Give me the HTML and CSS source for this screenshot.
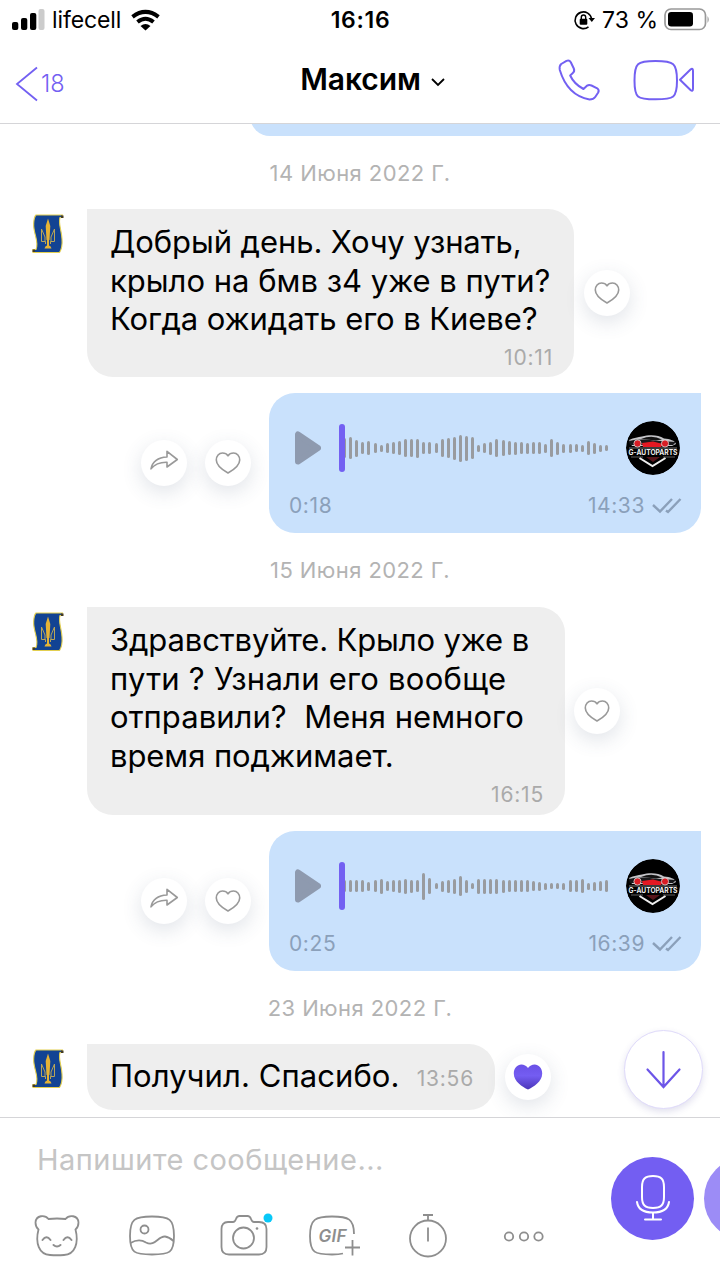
FILE: index.html
```html
<!DOCTYPE html>
<html lang="ru">
<head>
<meta charset="utf-8">
<title>Максим</title>
<link rel="stylesheet" href="styles.css">
</head>
<body>
<svg class="defs" width="0" height="0">
  <defs>
    <linearGradient id="violet" x1="0" y1="0" x2="0" y2="1"><stop offset="0" stop-color="#6a51e6"/><stop offset=".45" stop-color="#745df2"/><stop offset="1" stop-color="#4a35b8"/></linearGradient>
    <clipPath id="disc"><circle cx="27" cy="27" r="27"/></clipPath>
    <symbol id="heart" viewBox="0 0 46 46"><path d="M23 33C18.500 30.500 11.300 26.200 11.300 20C11.300 16 14 13 17.400 13C19.900 13 22 14.200 23 15.800C24 14.200 26.100 13 28.600 13C32 13 34.700 16 34.700 20C34.700 26.200 27.500 30.500 23 33Z" fill="none" stroke="#999" stroke-width="1.600" stroke-linejoin="round"/></symbol>
    <symbol id="share" viewBox="0 0 46 46"><path d="M26 17V11.300L36.300 19.500L26 27V22.200C19 22 13.500 24.500 10 28.800C11.500 21.500 17 17.500 26 17Z" fill="none" stroke="#999" stroke-width="1.600" stroke-linejoin="round"/></symbol>
    <symbol id="emblem" viewBox="0 0 34 42">
      <path d="M5 2H31.500V4.500H29C27 10 30.500 17 31 26C31.500 33 30.500 36.500 28.500 39.500H2V36.500H5C8.500 29 2 20 2.700 10.500C2.900 6 3.500 3.500 5 2Z" fill="#124393" stroke="#e3cf50" stroke-width="1.100"/>
      <path d="M30 2.500h2.500v2.500h-2.500zM1.500 36.500h2.500v2.500H1.500z" fill="#443b25"/>
      <path d="M17 5.500L19.300 13L18.500 27H15.500L14.700 13ZM13.500 35.500Q14 33 16 32.500V27H18V32.500Q20 33 20.500 35.500Z" fill="#e5b336"/>
      <path d="M10.500 16V28.500H14.500V31M10.500 16L14 24V28.500M23.500 16V28.500H19.500V31M23.500 16L20 24V28.500" fill="none" stroke="#b9a557" stroke-width="1"/>
    </symbol>
    <symbol id="ticks" viewBox="0 0 32 18"><path d="M1 8L8 14.500L20 2M14 13.500L16 15L28.500 2" fill="none" stroke="#8ba0ba" stroke-width="2.400"/></symbol>
    <symbol id="play" viewBox="0 0 26 34"><path d="M3 3.500V30.500L23 17Z" fill="#8e9aaf" stroke="#8e9aaf" stroke-width="6" stroke-linejoin="round"/></symbol>
    <symbol id="logo" viewBox="0 0 54 54">
      <g clip-path="url(#disc)">
        <circle cx="27" cy="27" r="27" fill="#000"/>
        <path d="M3 19C8 16.500 12 16.500 16 15.500C23 13.800 32 13.500 38 17.500C44 18 49 19.500 50 23L46 25H6Z" fill="#c4c4c8"/>
        <path d="M15 18Q26 13.500 36 18.500L30 19.500Z" fill="#111"/>
        <path d="M3 20Q14 17.500 28 19.500L50 21L47 24H4Z" fill="#18181a"/>
        <path d="M16 22L27 20.500L37 23L35 26H17Z" fill="#e41822"/>
        <circle cx="11.500" cy="22.500" r="3.600" fill="#d81d25" stroke="#ddd" stroke-width=".8"/><circle cx="39" cy="22.500" r="3.600" fill="#d81d25" stroke="#ddd" stroke-width=".8"/>
        <path d="M3 27H51" stroke="#aaa" stroke-width=".7"/>
        <text x="27" y="33.500" text-anchor="middle" textLength="49" lengthAdjust="spacingAndGlyphs" class="logo-text">G-AUTOPARTS</text>
        <path d="M5 36H17M37 36H49" stroke="#777" stroke-width=".8"/>
        <path d="M20 36H34L27 41Z" fill="#57151b"/>
        <path d="M13.500 37L26.500 45L39.500 37" fill="none" stroke="#eee" stroke-width="2"/>
      </g>
    </symbol>
  </defs>
</svg>

<header class="status">
  <div class="status-left">
    <svg width="33" height="22" viewBox="0 0 33 22"><rect x="0" y="13" width="6.300" height="8" rx="2"/><rect x="9" y="9" width="6.300" height="12" rx="2"/><rect x="18" y="4" width="6.300" height="17" rx="2"/><rect x="26.500" y="0" width="6" height="21" rx="2" fill="#ccc"/></svg>
    <span class="carrier">lifecell</span>
    <svg width="29" height="22" viewBox="0 0 29 22"><g fill="none" stroke="#000" stroke-width="4"><path d="M2.500 7.800Q15.500-2 28.500 7.800"/><path d="M7.500 13Q15.500 6.500 23.500 13"/></g><path d="M10.500 17Q15.500 13 20.500 17L15.500 21.500Z"/></svg>
  </div>
  <span class="clock">16:16</span>
  <div class="status-right">
    <svg width="21" height="20" viewBox="0 0 21 20"><path d="M14.500 16.800A8.300 8.300 0 1 1 17.600 9" fill="none" stroke="#000" stroke-width="1.600"/><path d="M14.500 8H21L17.800 12Z"/><rect x="5.700" y="8.800" width="7.600" height="6" rx="1"/><path d="M7.300 9V7.200a2.200 2.200 0 0 1 4.400 0V9" fill="none" stroke="#000" stroke-width="1.400"/></svg>
    <span class="percent">73 %</span>
    <svg width="46" height="22" viewBox="0 0 46 22"><rect x="1" y="0" width="40.500" height="20.500" rx="6" fill="none" stroke="#999" stroke-width="1.700"/><rect x="4" y="3" width="25" height="14.400" rx="3.200"/><path d="M43.500 7Q46 10.500 43.500 14Z" fill="#999"/></svg>
  </div>
</header>

<nav class="nav">
  <div class="back">
    <svg width="24" height="36" viewBox="0 0 24 36"><path d="M22 1.500L2 18L22 34.500" fill="none" stroke="#7360f2" stroke-width="1.800"/></svg>
    <span class="back-count">18</span>
  </div>
  <div class="contact"><span class="contact-name">Максим</span>
    <svg width="16" height="10" viewBox="0 0 16 10"><path d="M2 2L8 8L14 2" fill="none" stroke="#000" stroke-width="1.800"/></svg>
  </div>
  <div class="calls">
    <svg width="42" height="42" viewBox="0 0 42 42"><path d="M3.200 5L8.500 1.900Q11.300.7 12.800 3.300L15.800 9.500Q17.100 12.500 14.300 14.500L12.200 16.500Q16 25 25.500 30L29.200 26.600Q31 25.300 33.500 26.500L39.200 29.300Q41.500 31 40.200 33.500L37.200 38Q35.500 40.500 31.500 40.500Q9.500 36.500 1.800 11Q1 7 3.200 5Z" fill="none" stroke="#7360f2" stroke-width="2" stroke-linejoin="round"/></svg>
    <svg width="62" height="42" viewBox="0 0 62 42"><path d="M1.500 21.500C1.500 4 4 2 22.500 2S44 4 44 21.500S41 40.300 22.500 40.300S1.500 39 1.500 21.500Z" fill="none" stroke="#7360f2" stroke-width="2"/><path d="M47 20.700L57.500 10.500Q60 8.500 60 12V29.500Q60 33 57.500 31Z" fill="none" stroke="#7360f2" stroke-width="2" stroke-linejoin="round"/></svg>
  </div>
</nav>

<main class="chat">
  <div class="previous"><div class="previous-bubble"></div></div>
  <div class="date">14 Июня 2022 г.</div>

  <section class="row in">
    <svg class="sender" width="34" height="42"><use href="#emblem"/></svg>
    <div class="bubble first">
      <p class="line l1">Добрый день. Хочу узнать,</p>
      <p class="line l2">крыло на бмв з4 уже в пути?</p>
      <p class="line l3">Когда ожидать его в Киеве?</p>
      <time class="time">10:11</time>
    </div>
    <button class="round"><svg><use href="#heart"/></svg></button>
  </section>

  <section class="row out">
    <button class="round"><svg><use href="#share"/></svg></button>
    <button class="round"><svg><use href="#heart"/></svg></button>
    <div class="voice">
      <div class="player"><svg class="play"><use href="#play"/></svg><div class="wave" data-levels="20,22,17,12,14,10,7,10,12,14,18,18,19,12,12,10,18,20,23,27,25,22,7,10,13,18,16,14,13,12,11,12,12,9,18,13,9,9,8,7,14,11,7,6"></div><svg class="logo"><use href="#logo"/></svg></div>
      <div class="meta"><span>0:18</span><span class="sent">14:33<svg width="32" height="18"><use href="#ticks"/></svg></span></div>
    </div>
  </section>

  <div class="date later">15 Июня 2022 г.</div>

  <section class="row in">
    <svg class="sender" width="34" height="42"><use href="#emblem"/></svg>
    <div class="bubble second">
      <p class="line l4">Здравствуйте. Крыло уже в</p>
      <p class="line l5">пути ? Узнали его вообще</p>
      <p class="line l6">отправили?&nbsp; Меня немного</p>
      <p class="line l7">время поджимает.</p>
      <time class="time">16:15</time>
    </div>
    <button class="round"><svg><use href="#heart"/></svg></button>
  </section>

  <section class="row out">
    <button class="round"><svg><use href="#share"/></svg></button>
    <button class="round"><svg><use href="#heart"/></svg></button>
    <div class="voice">
      <div class="player"><svg class="play"><use href="#play"/></svg><div class="wave" data-levels="12,12,12,12,9,12,15,10,12,13,15,13,12,27,16,6,11,13,15,20,13,6,15,15,15,15,13,12,12,12,12,10,9,7,6,6,7,12,12,14,7,9,10,12"></div><svg class="logo"><use href="#logo"/></svg></div>
      <div class="meta"><span>0:25</span><span class="sent">16:39<svg width="32" height="18"><use href="#ticks"/></svg></span></div>
    </div>
  </section>

  <div class="date last">23 Июня 2022 г.</div>

  <section class="row in">
    <svg class="sender" width="34" height="42"><use href="#emblem"/></svg>
    <div class="bubble short">
      <p class="line l8">Получил. Спасибо.</p>
      <time class="time">13:56</time>
    </div>
    <button class="round"><svg viewBox="0 0 46 46"><path d="M23 35.500C17.500 33 8.800 27.500 8.800 19.500C8.800 14 12.500 10.500 16.300 10.500Q20.500 10.500 23 14Q25.500 10.500 29.700 10.500C33.500 10.500 37.200 14 37.200 19.500C37.200 27.500 28.500 33 23 35.500Z" fill="url(#violet)"/></svg></button>
  </section>
  <button class="scroll-down"><svg width="36" height="38" viewBox="0 0 36 38"><path d="M17.500 1V36M1.500 18.500L17.500 36L33.500 18.500" fill="none" stroke="#6c55e8" stroke-width="2.200" stroke-linecap="round"/></svg></button>
</main>

<footer class="composer">
  <div class="compose-main">
    <div class="placeholder">Напишите сообщение...</div>
    <div class="tools">
      <svg width="46" height="44" viewBox="0 0 46 44"><path d="M14.500 5Q23 4 31.500 5C35 .5 44 1 44.500 8.500Q44.500 13 41.500 15.500C45 29 41 40.500 30 41Q23 41.500 16 41C5 40.500 1 29 4.500 15.500Q1.500 13 1.500 8.500C2 1 11 .5 14.500 5Z"/><path d="M8.500 26Q12.500 20.500 16.500 26M29.500 26Q33.500 20.500 37.500 26M19.500 31Q23 34 26.500 31" stroke-width="2" stroke-linecap="round"/></svg>
      <svg width="46" height="44" viewBox="0 0 46 44"><path d="M1 22C1 5 5.500 2.500 23 2.500S45 5 45 22S40.500 40.500 23 40.500S1 39 1 22Z"/><circle cx="15.500" cy="15.500" r="4"/><path d="M1.500 29Q10 24 17 28.500C26 33 29 22 36 22.500Q40 23 44.500 27"/></svg>
      <svg class="camera" width="48" height="44" viewBox="0 0 48 44"><path d="M8 8H13Q15 8 16 5Q17 2 19.500 2H27.500Q30 2 31 5Q32 8 34 8H39Q46.500 8 46.500 15V33Q46.500 40.500 39 40.500H9Q1.500 40.500 1.500 33V15Q1.500 8 8 8Z"/><circle cx="23.500" cy="24" r="10.500"/><circle cx="37" cy="14.500" r="1.300" fill="#8e8e8e" stroke="none"/><circle cx="48" cy="4" r="4.500" fill="#08c8f8" stroke="none"/></svg>
      <svg class="gif" width="52" height="44" viewBox="0 0 52 44"><path d="M45 20C45 5 39.500 2.500 23 2.500S1 5 1 22S6 40.500 23 40.500Q30 40.500 34 39.500M43.500 26V41.500M36 33.500H51"/><text x="9.500" y="27.500" textLength="28" class="gif-text">GIF</text></svg>
      <svg width="38" height="44" viewBox="0 0 38 44"><circle cx="19" cy="24.500" r="18"/><path d="M14 1H24M19 1V6.500M19 13.500V27.500"/></svg>
      <svg width="40" height="44" viewBox="0 0 40 44"><circle cx="5" cy="22.500" r="4.200"/><circle cx="20" cy="22.500" r="4.200"/><circle cx="34.500" cy="22.500" r="4.200"/></svg>
    </div>
  </div>
  <div class="record">
    <button class="mic"><svg width="36" height="48" viewBox="0 0 36 48"><g fill="none" stroke="#fff" stroke-width="2" stroke-linecap="round"><path d="M18 1C26 1 29 4 29 12V22C29 30 26 33 18 33S7 30 7 22V12C7 4 10 1 18 1Z"/><path d="M2 27C3 34 9 37.500 18 37.500S33 34 34 27M18 38V44.500M10 44.500H26"/></g></svg></button>
    <button class="next"></button>
  </div>
</footer>
<script src="wave.js"></script>
</body>
</html>
```
FILE: styles.css
```css
* { box-sizing: border-box; }
body { margin: 0; width: 720px; height: 1280px; overflow: hidden; display: flex; flex-direction: column; background: #fff; color: #000; font-family: Inter, "Noto Sans", sans-serif; }
.defs { width: 0; height: 0; }
button { border: 0; padding: 0; background: none; flex: none; }
svg { display: block; overflow: visible; flex: none; }
p { margin: 0; }
.status { height: 40px; flex: none; display: grid; grid-template-columns: 1fr auto 1fr; align-items: center; padding: 0 10px 0 12px; font-size: 23px; line-height: 40px; }
.status-left { display: flex; align-items: center; gap: 8px; }
.status-left svg:first-child { margin-top: -1px; }
.carrier { width: 70px; letter-spacing: -.1px; white-space: nowrap; margin: 0 0 0 -1px; }
.clock { font-weight: 600; font-size: 23px; letter-spacing: .7px; margin-left: -1px; }
.status-right { display: flex; align-items: center; justify-content: flex-end; gap: 6px; white-space: nowrap; }
.percent { font-size: 23px; padding-left: 1px; }
.nav { height: 84px; flex: none; display: grid; grid-template-columns: 1fr auto 1fr; align-items: center; padding: 0 25px 4px 15px; border-bottom: 1px solid #d5d5d8; }
.back { display: flex; align-items: center; gap: 2px; padding-top: 8px; color: #7360f2; }
.back-count { font-size: 23.500px; font-weight: 300; }
.contact { display: flex; align-items: center; gap: 9px; padding: 0 0 2px 36px; }
.contact svg { margin-top: 7px; }
.contact-name { font-size: 30px; font-weight: 600; letter-spacing: -.1px; }
.calls { display: flex; justify-content: flex-end; gap: 33px; }
.chat { height: 993px; flex: none; position: relative; overflow: hidden; }
.previous { display: flow-root; height: 12px; padding-left: 250px; }
.previous-bubble { width: 448px; height: 40px; margin-top: -28px; background: #c9e1fc; border-radius: 28px; }
.date { height: 73px; line-height: 75px; text-align: center; font-size: 22px; color: #b3b3b3; letter-spacing: .42px; text-transform: capitalize; }
.date.later { height: 74px; }
.row { display: flex; align-items: center; }
.in { padding-left: 31px; gap: 9px; }
.sender { align-self: flex-start; margin: 4px 13px 0 0; }
.bubble { background: #eee; border-radius: 0 26px 26px 26px; padding: 14px 22px 0 23px; flex: none; display: flex; flex-direction: column; }
.first { width: 487px; height: 168px; }
.second { width: 478px; height: 208px; }
.short { width: 408px; height: 66px; flex-direction: row; align-items: center; justify-content: space-between; padding-top: 0; }
.line { font-size: 31px; line-height: 38.700px; white-space: nowrap; }
.l1, .l3 { letter-spacing: -.09px; }
.l4 { letter-spacing: -.13px; }
.l5 { letter-spacing: .25px; }
.l6 { letter-spacing: .04px; }
.l7 { letter-spacing: -.07px; }
.l8 { letter-spacing: .08px; padding-bottom: 1px; }
.time { font-size: 21px; line-height: 37px; color: #aaa; align-self: flex-end; letter-spacing: .8px; margin-right: -1px; }
.short .time { align-self: center; padding-top: 3px; }
.round { width: 46px; height: 46px; border-radius: 50%; background: #fff; box-shadow: 0 6px 20px rgba(65, 80, 110, .16); }
.in .round { margin-left: 1px; }
.second + .round { margin-left: 0; }
.round svg { width: 46px; height: 46px; }
.out { justify-content: flex-end; padding-right: 19px; gap: 18px; margin-top: 16px; }
.voice { width: 432px; height: 140px; background: #c9e1fc; border-radius: 26px 0 26px 26px; padding: 25px 17px 0 20px; }
.player { display: flex; align-items: center; padding: 3px 2px 0 6px; }
.play { width: 26px; height: 34px; margin-right: 18px; }
.wave { width: 268px; height: 48px; display: flex; align-items: center; gap: 3.100px; flex: none; }
.wave::before { content: ""; width: 5.500px; height: 48px; border-radius: 3px; background: #7360f2; margin-right: -4.500px; z-index: 1; flex: none; }
.bar { width: 3px; border-radius: 1.500px; background: #999b9f; flex: none; }
.logo { width: 54px; height: 54px; margin-left: 19px; }
.logo-text { font: 700 7px Inter, sans-serif; fill: #eee; }
.meta { display: flex; justify-content: space-between; color: #8ba0ba; font-size: 21px; line-height: 62px; letter-spacing: .6px; }
.sent { display: flex; align-items: center; gap: 7px; }
.scroll-down { position: absolute; right: 17px; bottom: 8px; width: 79px; height: 79px; border: 1.500px solid #dfdafa; border-radius: 50%; background: #fff; box-shadow: 0 3px 7px rgba(70, 60, 150, .16); display: grid; place-items: center; }
.composer { height: 163px; flex: none; border-top: 1px solid #d5d5d8; display: flex; justify-content: space-between; background: #fff; }
.compose-main { padding: 21px 0 0 34px; }
.placeholder { height: 42px; margin-left: 3px; line-height: 41px; font-size: 29px; letter-spacing: .48px; color: #c5c5c5; white-space: nowrap; }
.tools { display: flex; padding-top: 33px; }
.tools svg { fill: none; stroke: #8e8e8e; stroke-width: 1.800; margin-right: 49px; }
.tools .camera { margin-right: 41px; }
.tools svg:nth-child(2) { margin-right: 45px; }
.tools .gif { margin-right: 48px; }
.tools svg:nth-child(5) { margin-right: 57px; }
.tools svg:last-child { margin-right: 0; }
.gif-text { font: italic 600 17px Inter, sans-serif; fill: #8e8e8e; stroke: none; }
.record { display: flex; gap: 10px; width: 109px; padding-top: 39px; flex: none; overflow: hidden; }
.mic, .next { width: 83px; height: 83px; border-radius: 50%; background: #735ef2; display: grid; place-items: center; }
.next { background: #9c8cf6; }
```
FILE: wave.js
```js
document.querySelectorAll('.wave').forEach(function (wave) {
  wave.dataset.levels.split(',').forEach(function (level) {
    var bar = document.createElement('span');
    bar.className = 'bar';
    bar.style.height = level + 'px';
    wave.appendChild(bar);
  });
});
```
